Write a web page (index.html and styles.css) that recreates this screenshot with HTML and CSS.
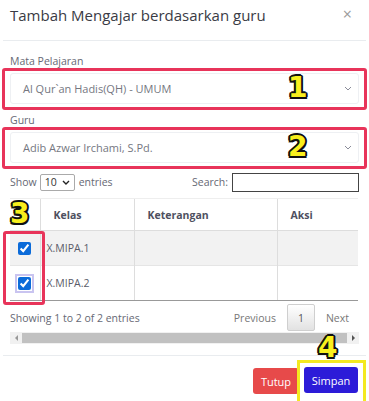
FILE: index.html
```html
<!DOCTYPE html>
<html lang="id">
<head>
    <meta charset="UTF-8">
    <meta name="viewport" content="width=device-width, initial-scale=1.0">
    <link rel="stylesheet" href="styles.css">
    <title>Tambah Mengajar berdasarkan guru</title>
</head>
<body>
    <div class="modal">
        <div class="modal-header">
            <h5 class="modal-title">Tambah Mengajar berdasarkan guru</h5>
            <span class="close">&times;</span>
        </div>
        <div class="modal-body">
            <label class="form-label label-first">Mata Pelajaran</label>
            <div class="mark-box">
                <div class="select-box">
                    <span>Al Qur`an Hadis(QH) - UMUM</span>
                    <svg class="chevron" width="8" height="5" viewBox="0 0 8 5"><path d="M1 1l3 3 3-3" fill="none" stroke="#8a8c99" stroke-width="1"/></svg>
                </div>
                <span class="mark-num num-1">1</span>
            </div>

            <label class="form-label">Guru</label>
            <div class="mark-box">
                <div class="select-box">
                    <span>Adib Azwar Irchami, S.Pd.</span>
                    <svg class="chevron" width="8" height="5" viewBox="0 0 8 5"><path d="M1 1l3 3 3-3" fill="none" stroke="#8a8c99" stroke-width="1"/></svg>
                </div>
                <span class="mark-num num-2">2</span>
            </div>

            <div class="table-tools">
                <div class="length">
                    Show
                    <span class="small-select">10
                        <svg width="8" height="5" viewBox="0 0 8 5"><path d="M1 1l3 3 3-3" fill="none" stroke="#222" stroke-width="1.4"/></svg>
                    </span>
                    entries
                </div>
                <div class="search">
                    Search:
                    <input type="text" class="search-input">
                </div>
            </div>

            <div class="table-wrap">
                <table class="data-table">
                    <thead>
                        <tr>
                            <th class="col-check"></th>
                            <th class="col-kelas">Kelas</th>
                            <th class="col-ket">Keterangan</th>
                            <th class="col-aksi">Aksi</th>
                        </tr>
                    </thead>
                    <tbody>
                        <tr class="odd">
                            <td class="col-check"><input type="checkbox" checked></td>
                            <td>X.MIPA.1</td>
                            <td></td>
                            <td></td>
                        </tr>
                        <tr>
                            <td class="col-check"><input type="checkbox" class="focused" checked></td>
                            <td>X.MIPA.2</td>
                            <td></td>
                            <td></td>
                        </tr>
                    </tbody>
                </table>
                <span class="mark-num num-3">3</span>
                <div class="check-box-mark"></div>
            </div>

            <div class="table-info">
                <span>Showing 1 to 2 of 2 entries</span>
                <div class="paging">
                    <span class="page-link">Previous</span>
                    <span class="page-btn">1</span>
                    <span class="page-link">Next</span>
                </div>
            </div>

            <div class="scrollbar">
                <span class="arrow arrow-left"></span>
                <span class="thumb"></span>
                <span class="arrow arrow-right"></span>
            </div>
        </div>
        <div class="modal-footer">
            <button class="btn btn-danger">Tutup</button>
            <div class="save-mark">
                <button class="btn btn-primary">Simpan</button>
                <span class="mark-num num-4">4</span>
            </div>
        </div>
    </div>
</body>
</html>
```

FILE: styles.css
```css
body {
    margin: 0;
    padding: 0;
    background-color: #fff;
    font-family: "Open Sans", "Noto Sans", sans-serif;
    color: #5a5c69;
    overflow: hidden;
}

.modal {
    width: 363px;
    padding: 0 3px;
    height: 401px;
}

.modal-header {
    height: 36px;
    padding: 4px 7px 0;
    display: flex;
    justify-content: space-between;
    align-items: flex-start;
    border-bottom: 1px solid #e9ecef;
}

.modal-title {
    margin: 0;
    font-size: 15px;
    font-weight: 400;
    line-height: 22px;
    color: #3a3b45;
}

.close {
    font-size: 16px;
    line-height: 20px;
    color: #9a9a9a;
    margin-right: 7px;
}

.modal-body {
    padding: 0 7px;
}

.form-label {
    display: block;
    font-size: 10.5px;
    line-height: 14px;
    height: 14px;
    color: #666874;
    margin-top: 3px;
}

.label-first {
    margin-top: 13px;
}

.mark-box {
    position: relative;
    margin: 0 -8px;
    border: 3px solid #e8345a;
    border-radius: 3px;
    padding: 2px 5px 3px;
}

.select-box {
    height: 29px;
    border: 1px solid #eef0f3;
    border-radius: 3px;
    display: flex;
    align-items: center;
    justify-content: space-between;
    padding: 0 6px 0 12px;
    font-size: 11px;
    color: #75777f;
}

.mark-num {
    position: absolute;
    font-family: "DejaVu Sans", sans-serif;
    font-weight: 700;
    font-size: 28px;
    line-height: 28px;
    color: #f8ef1d;
    text-shadow:
        2px 0 0 #111, -2px 0 0 #111, 0 2px 0 #111, 0 -2px 0 #111,
        1.5px 1.5px 0 #111, -1.5px 1.5px 0 #111, 1.5px -1.5px 0 #111, -1.5px -1.5px 0 #111;
    z-index: 2;
}

.num-1,
.num-2 {
    left: 283px;
    top: 3px;
}

.table-tools {
    margin-top: 3px;
    height: 20px;
    display: flex;
    justify-content: space-between;
    align-items: center;
    font-size: 10.5px;
    color: #666874;
}

.length {
    display: flex;
    align-items: center;
}

.small-select {
    display: inline-flex;
    align-items: center;
    justify-content: space-between;
    width: 25px;
    height: 15px;
    padding: 0 4px;
    margin: 0 4px 0 3px;
    border: 1px solid #aaa;
    border-radius: 2px;
    color: #333;
}

.search {
    display: flex;
    align-items: center;
}

.search-input {
    box-sizing: border-box;
    width: 127px;
    height: 19px;
    margin-left: 4px;
    padding: 0;
    border: 1px solid #444;
    border-radius: 0;
}

.table-wrap {
    position: relative;
    margin-top: 6px;
}

.data-table {
    width: 348px;
    border-collapse: collapse;
    font-size: 10.5px;
    table-layout: fixed;
}

.data-table th,
.data-table td {
    box-sizing: border-box;
}

.data-table th {
    height: 32px;
    text-align: left;
    font-weight: 700;
    color: #4e5060;
    border-top: 1px solid #eee;
    border-bottom: 1px solid #ddd;
    border-left: 1px solid #ddd;
    padding: 0 0 0 13px;
}

.data-table td {
    height: 35px;
    border-left: 1px solid #ddd;
    border-top: 1px solid #e5e5e5;
    padding: 0 0 0 6px;
    color: #5a5c69;
}

.data-table th:first-child,
.data-table td:first-child {
    border-left: none;
}

.data-table tbody tr:last-child td {
    border-bottom: 1px solid #999;
}

.data-table tr.odd td {
    background-color: #f2f2f2;
}

.col-check {
    width: 30px;
}

.col-kelas {
    width: 94px;
}

.col-ket {
    width: 143px;
}

.data-table .col-check {
    padding: 0;
    text-align: center;
}

.data-table input[type="checkbox"] {
    width: 13px;
    height: 13px;
    margin: 0;
    vertical-align: middle;
    accent-color: #0b6bd9;
}

.data-table input.focused {
    outline: 2px solid #c9c4f0;
    outline-offset: 1px;
}

.num-3 {
    left: 0;
    top: 2px;
}

.check-box-mark {
    position: absolute;
    left: -7px;
    top: 33px;
    width: 36px;
    height: 68px;
    border: 3px solid #e8345a;
    border-radius: 3px;
}

.table-info {
    height: 29px;
    margin-top: 2px;
    display: flex;
    justify-content: space-between;
    align-items: center;
    font-size: 10.5px;
    color: #666874;
}

.paging {
    display: flex;
    align-items: center;
}

.page-link {
    color: #777;
    padding: 0 11px;
}

.page-btn {
    width: 26px;
    height: 25px;
    display: flex;
    align-items: center;
    justify-content: center;
    border: 1px solid #cfcfcf;
    border-radius: 2px;
    background: linear-gradient(#fff, #e2e2e2);
    color: #555;
}

.paging .page-link:last-child {
    padding-right: 10px;
}

.scrollbar {
    height: 12px;
    background-color: #f1f1f1;
    display: flex;
    align-items: center;
}

.thumb {
    flex: 1;
    height: 10px;
    background-color: #c1c1c1;
}

.arrow {
    width: 12px;
    height: 12px;
    display: flex;
    align-items: center;
    justify-content: center;
}

.arrow::before {
    content: "";
    border-top: 3px solid transparent;
    border-bottom: 3px solid transparent;
}

.arrow-left::before {
    border-right: 3px solid #999;
}

.arrow-right::before {
    border-left: 3px solid #555;
}

.modal-footer {
    margin-top: 11px;
    border-top: 1px solid #e9ecef;
    display: flex;
    justify-content: flex-end;
    align-items: flex-start;
    padding: 4px 0 0;
}

.btn {
    font-family: "Open Sans", "Noto Sans", sans-serif;
    font-size: 11px;
    color: #fff;
    border: none;
    border-radius: 3px;
    height: 26px;
    padding: 0 10px;
}

.btn-danger {
    background-color: #e74a4a;
    width: 46px;
    padding: 0;
    margin-top: 8px;
    margin-right: -2px;
}

.save-mark {
    position: relative;
    border: 3px solid #f3e920;
    border-bottom: none;
    padding: 4px 5px 9px 4px;
}

.btn-primary {
    background-color: #2c1bd8;
    width: 54px;
    padding: 0;
}

.num-4 {
    left: 18px;
    top: -29px;
}
```
